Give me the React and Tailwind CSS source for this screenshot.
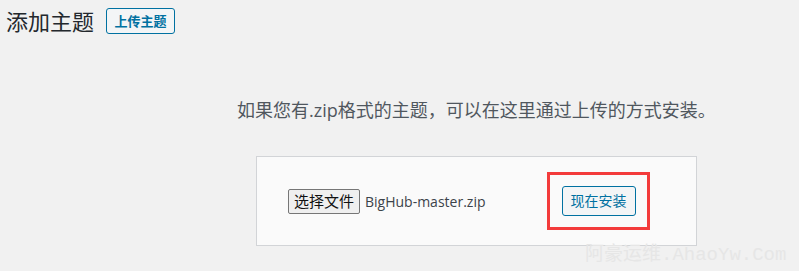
import React from 'react';

const cjk = { fontFamily: '"Open Sans", "Noto Sans CJK SC", sans-serif' };

const App = () => {
    return (
        <div className="relative w-[799px] h-[271px] bg-[#f1f1f1] overflow-hidden text-[#23282d]" style={cjk}>
            <div className="flex items-center gap-[12px] pl-[6px] pt-[8px]">
                <h1 className="text-[22px] leading-[26px] font-normal">添加主题</h1>
                <button className="h-[26px] w-[69px] border border-[#0071a1] rounded-[3px] bg-[#f3f5f6] text-[#0071a1] text-[13px] font-semibold leading-none">
                    上传主题
                </button>
            </div>

            <p className="ml-[237px] mt-[64px] text-[18px] leading-[24px] text-[#50575e]">
                如果您有.zip格式的主题，可以在这里通过上传的方式安装。
            </p>

            <div className="ml-[256px] mt-[34px] w-[441px] h-[90px] border border-[#d2d4d7] bg-[#fafafa] flex items-center">
                <button className="ml-[31px] h-[25px] w-[72px] border border-[#767676] rounded-[2px] bg-[#efefef] text-[15px] text-[#111] leading-none">
                    选择文件
                </button>
                <span className="ml-[5px] text-[14px] text-[#3c434a]">BigHub-master.zip</span>
                <div className="ml-auto mr-[46px] w-[103px] h-[58px] border-[3px] border-[#f33b3b] flex items-center justify-center">
                    <button className="h-[30px] w-[74px] border border-[#0071a1] rounded-[3px] bg-[#f3f5f6] text-[#0071a1] text-[14px] leading-none">
                        现在安装
                    </button>
                </div>
            </div>

            <div
                className="absolute left-[585px] top-[241px] text-[19px] text-[#e6e6e6] whitespace-nowrap"
                style={{ fontFamily: '"Liberation Mono", "Noto Sans CJK SC", monospace' }}
            >
                阿豪运维.AhaoYw.Com
            </div>
        </div>
    );
};

export default App;
